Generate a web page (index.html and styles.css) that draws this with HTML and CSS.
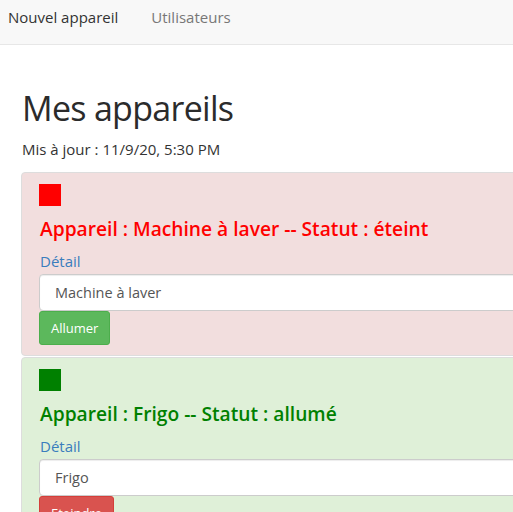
FILE: index.html
```html
<!DOCTYPE html>
<html lang="fr">
<head>
<meta charset="utf-8">
<title>Mes appareils</title>
<link rel="stylesheet" href="styles.css">
</head>
<body>
<nav class="navbar">
  <a class="nav-link nav-link-active" href="#">Nouvel appareil</a>
  <a class="nav-link" href="#">Utilisateurs</a>
</nav>
<main class="container">
  <h1 class="page-title">Mes appareils</h1>
  <p class="updated">Mis à jour : 11/9/20, 5:30 PM</p>
  <ul class="device-list">
    <li class="device device-off">
      <div class="status-square status-off"></div>
      <h4 class="device-title title-off">Appareil : Machine à laver -- Statut : éteint</h4>
      <label class="field-label">Détail</label>
      <input class="form-control" type="text" value="Machine à laver">
      <button class="btn btn-success" type="button">Allumer</button>
    </li>
    <li class="device device-on">
      <div class="status-square status-on"></div>
      <h4 class="device-title title-on">Appareil : Frigo -- Statut : allumé</h4>
      <label class="field-label">Détail</label>
      <input class="form-control" type="text" value="Frigo">
      <button class="btn btn-danger" type="button">Eteindre</button>
    </li>
  </ul>
</main>
</body>
</html>
```

FILE: styles.css
```css
html {
  overflow: hidden;
}

body {
  margin: 0;
  font-family: "Open Sans", "Noto Sans", sans-serif;
  color: #333;
  background: #fff;
}

.navbar {
  display: flex;
  align-items: center;
  gap: 33px;
  height: 44px;
  padding: 0 0 0 8px;
  background: #f8f8f8;
  border-bottom: 1px solid #e7e7e7;
}

.nav-link {
  font-size: 15px;
  line-height: 20px;
  color: #777;
  text-decoration: none;
  margin-top: -10px;
}

.nav-link-active {
  color: #333;
}

.container {
  width: 760px;
  padding: 0 0 0 21px;
}

.page-title {
  margin: 41px 0 0 1px;
  font-size: 34px;
  line-height: 44px;
  letter-spacing: -0.7px;
  font-weight: 500;
  color: #2b2b2b;
}

.updated {
  margin: 9px 0 0 1px;
  font-size: 15px;
  line-height: 20px;
}

.device-list {
  list-style: none;
  margin: 13px 0 0;
  padding: 0;
  display: flex;
  flex-direction: column;
  gap: 1px;
}

.device {
  display: flex;
  flex-direction: column;
  align-items: flex-start;
  padding: 11px 17px 10px;
  border: 1px solid #ddd;
  border-radius: 4px;
}

.device-off {
  background: #f2dede;
}

.device-on {
  background: #dff0d8;
}

.status-square {
  width: 22px;
  height: 22px;
}

.status-off {
  background: #ff0000;
}

.status-on {
  background: #008000;
}

.device-title {
  margin: 11px 0 0 1px;
  font-size: 19.2px;
  line-height: 24px;
  font-weight: 600;
}

.title-off {
  color: #ff0000;
}

.title-on {
  color: #008000;
}

.field-label {
  margin: 10px 0 0 1px;
  font-size: 15px;
  line-height: 20px;
  color: #3a7dbd;
}

.form-control {
  box-sizing: border-box;
  margin-top: 3px;
  width: 100%;
  height: 37px;
  padding: 0 15px;
  font-family: inherit;
  font-size: 14.5px;
  color: #555;
  background: #fff;
  border: 1px solid #ccc;
  border-radius: 4px;
  box-shadow: inset 0 1px 1px rgba(0, 0, 0, 0.075);
}

.btn {
  box-sizing: border-box;
  height: 34px;
  padding: 0 11px;
  font-family: inherit;
  font-size: 13px;
  color: #fff;
  border: 1px solid transparent;
  border-radius: 3px;
}

.btn-success {
  background: #5cb85c;
  border-color: #4cae4c;
}

.btn-danger {
  background: #d9534f;
  border-color: #d43f3a;
}
```
